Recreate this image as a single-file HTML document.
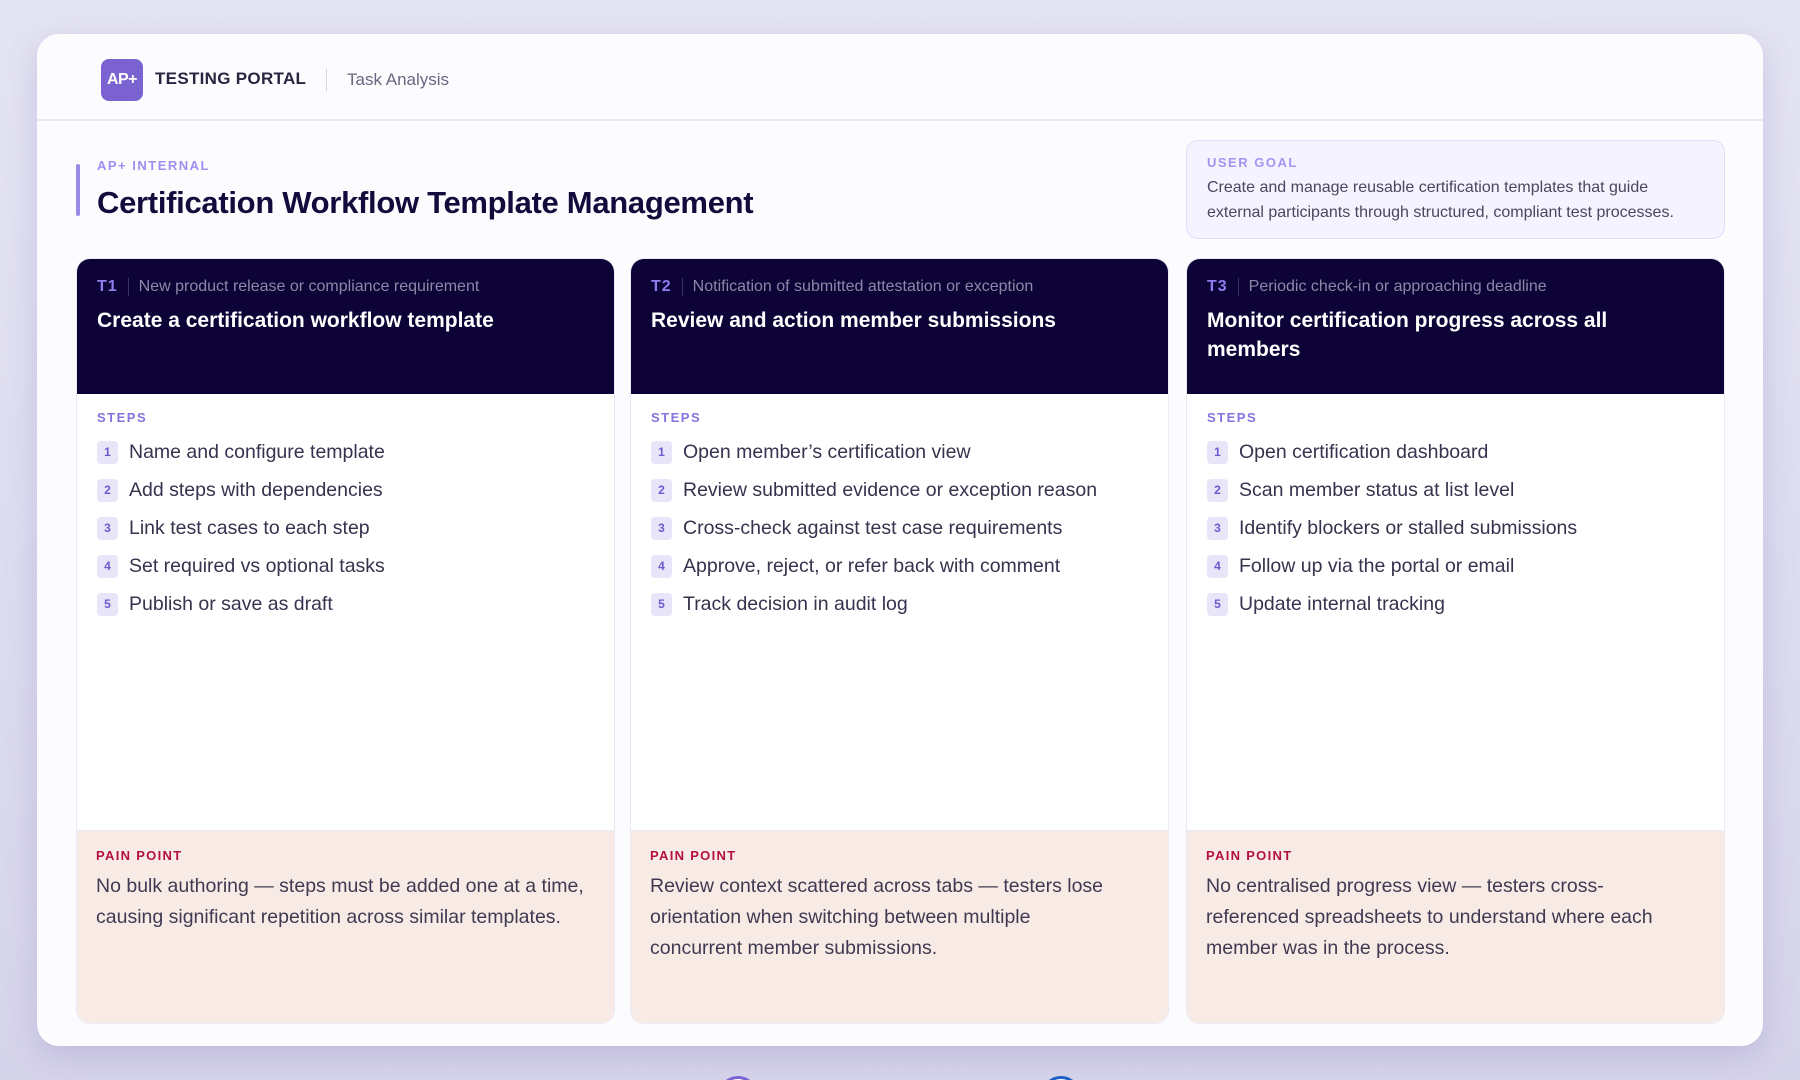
<!DOCTYPE html>
<html><head><meta charset="utf-8"><style>
*{box-sizing:border-box;margin:0;padding:0}
html{width:1800px;height:1080px;overflow:hidden}
body{width:1800px;height:1080px;overflow:hidden;background:linear-gradient(180deg,#e4e4f3 0%,#dcdbef 60%,#d6d4ea 100%);font-family:"Liberation Sans",sans-serif;position:relative}
.main{position:absolute;left:37px;top:34px;width:1726px;height:1012px;background:#fcfcff;border-radius:22px;box-shadow:0 10px 30px rgba(120,110,180,.25)}
.hdr{position:absolute;left:0;top:0;width:100%;height:87px;border-bottom:2px solid #e8e7f2}
.logo{position:absolute;left:64px;top:25px;width:42px;height:42px;border-radius:8px;background:#7a63d1;color:#fff;font-weight:bold;font-size:16px;line-height:42px;text-align:center;letter-spacing:-0.5px}
.brand{position:absolute;left:118px;top:35px;font-size:17px;font-weight:bold;color:#2a2440;letter-spacing:.3px}
.dv{position:absolute;left:289px;top:35px;width:1px;height:22px;background:#d8d6e4}
.sub{position:absolute;left:310px;top:36px;font-size:17px;color:#6a6680}
.bar{position:absolute;left:39px;top:130px;width:4px;height:52px;background:#9c8ae8;border-radius:2px}
.eyebrow{position:absolute;left:60px;top:124px;font-size:13px;font-weight:bold;color:#a08ef0;letter-spacing:1.5px}
.title{position:absolute;left:60px;top:151px;font-size:31px;font-weight:bold;color:#130b3c;letter-spacing:-.3px}
.goal{position:absolute;left:1149px;top:106px;width:539px;height:99px;background:#f5f3fe;border:1.5px solid #e2dcfb;border-radius:12px;padding:14px 20px}
.goal .l{font-size:13px;font-weight:bold;color:#a693f2;letter-spacing:1.5px}
.goal .t{font-size:16px;color:#4a4660;line-height:25px;margin-top:5px}
.card{position:absolute;top:224px;width:539px;height:766px;border-radius:14px;background:#fff;border:1.5px solid #ebe9f5;overflow:hidden}
.dark{height:135px;background:#0d0336;padding:19px 20px}
.meta{font-size:16px;color:#8d88a8;display:flex;align-items:center}
.meta b{color:#8f7ef0;font-size:16px;letter-spacing:1px;margin-right:10px}
.meta i{display:inline-block;width:1px;height:18px;background:#3a3260;margin-right:10px}
.ct{color:#fff;font-size:21px;font-weight:bold;line-height:29px;margin-top:10px}
.steps{padding:16px 20px;height:436px}
.sl{font-size:13px;font-weight:bold;color:#8672de;letter-spacing:1.5px;margin-bottom:8px}
.st{display:flex;align-items:center;height:38px;font-size:19.5px;color:#37324d}
.st span{display:inline-block;width:21px;height:23px;border-radius:4px;background:#e8e5f8;color:#6c5bd0;font-size:12px;font-weight:bold;text-align:center;line-height:23px;margin-right:11px}
.pain{height:195px;background:#f8ebe6;border-top:1.5px solid #ebe9f5;padding:17px 30px 17px 19px}
.pl{font-size:13px;font-weight:bold;color:#b3103f;letter-spacing:1.3px}
.pt{font-size:19.5px;color:#3f3a52;line-height:31px;margin-top:8px}
.circ{position:absolute;top:1076px;width:40px;height:40px;border-radius:50%;border:3px solid #7b62d0;background:#fff}
</style></head><body>
<div class="main">
<div class="hdr"><div class="logo">AP+</div><div class="brand">TESTING PORTAL</div><div class="dv"></div><div class="sub">Task Analysis</div></div>
<div class="bar"></div><div class="eyebrow">AP+ INTERNAL</div><div class="title">Certification Workflow Template Management</div>
<div class="goal"><div class="l">USER GOAL</div><div class="t">Create and manage reusable certification templates that guide external participants through structured, compliant test processes.</div></div>
<div class="card" style="left:39px"><div class="dark"><div class="meta"><b>T1</b><i></i>New product release or compliance requirement</div><div class="ct">Create a certification workflow template</div></div>
<div class="steps"><div class="sl">STEPS</div>
<div class="st"><span>1</span>Name and configure template</div><div class="st"><span>2</span>Add steps with dependencies</div><div class="st"><span>3</span>Link test cases to each step</div><div class="st"><span>4</span>Set required vs optional tasks</div><div class="st"><span>5</span>Publish or save as draft</div></div>
<div class="pain"><div class="pl">PAIN POINT</div><div class="pt">No bulk authoring — steps must be added one at a time, causing significant repetition across similar templates.</div></div></div>
<div class="card" style="left:593px"><div class="dark"><div class="meta"><b>T2</b><i></i>Notification of submitted attestation or exception</div><div class="ct">Review and action member submissions</div></div>
<div class="steps"><div class="sl">STEPS</div>
<div class="st"><span>1</span>Open member’s certification view</div><div class="st"><span>2</span>Review submitted evidence or exception reason</div><div class="st"><span>3</span>Cross-check against test case requirements</div><div class="st"><span>4</span>Approve, reject, or refer back with comment</div><div class="st"><span>5</span>Track decision in audit log</div></div>
<div class="pain"><div class="pl">PAIN POINT</div><div class="pt">Review context scattered across tabs — testers lose orientation when switching between multiple<br>concurrent member submissions.</div></div></div>
<div class="card" style="left:1149px"><div class="dark"><div class="meta"><b>T3</b><i></i>Periodic check-in or approaching deadline</div><div class="ct">Monitor certification progress across all members</div></div>
<div class="steps"><div class="sl">STEPS</div>
<div class="st"><span>1</span>Open certification dashboard</div><div class="st"><span>2</span>Scan member status at list level</div><div class="st"><span>3</span>Identify blockers or stalled submissions</div><div class="st"><span>4</span>Follow up via the portal or email</div><div class="st"><span>5</span>Update internal tracking</div></div>
<div class="pain"><div class="pl">PAIN POINT</div><div class="pt">No centralised progress view — testers cross-referenced spreadsheets to understand where each member was in the process.</div></div></div>
</div>
<div class="circ" style="left:718px"></div><div class="circ" style="left:1041px;border-color:#1d5fc9"></div>
</body></html>
